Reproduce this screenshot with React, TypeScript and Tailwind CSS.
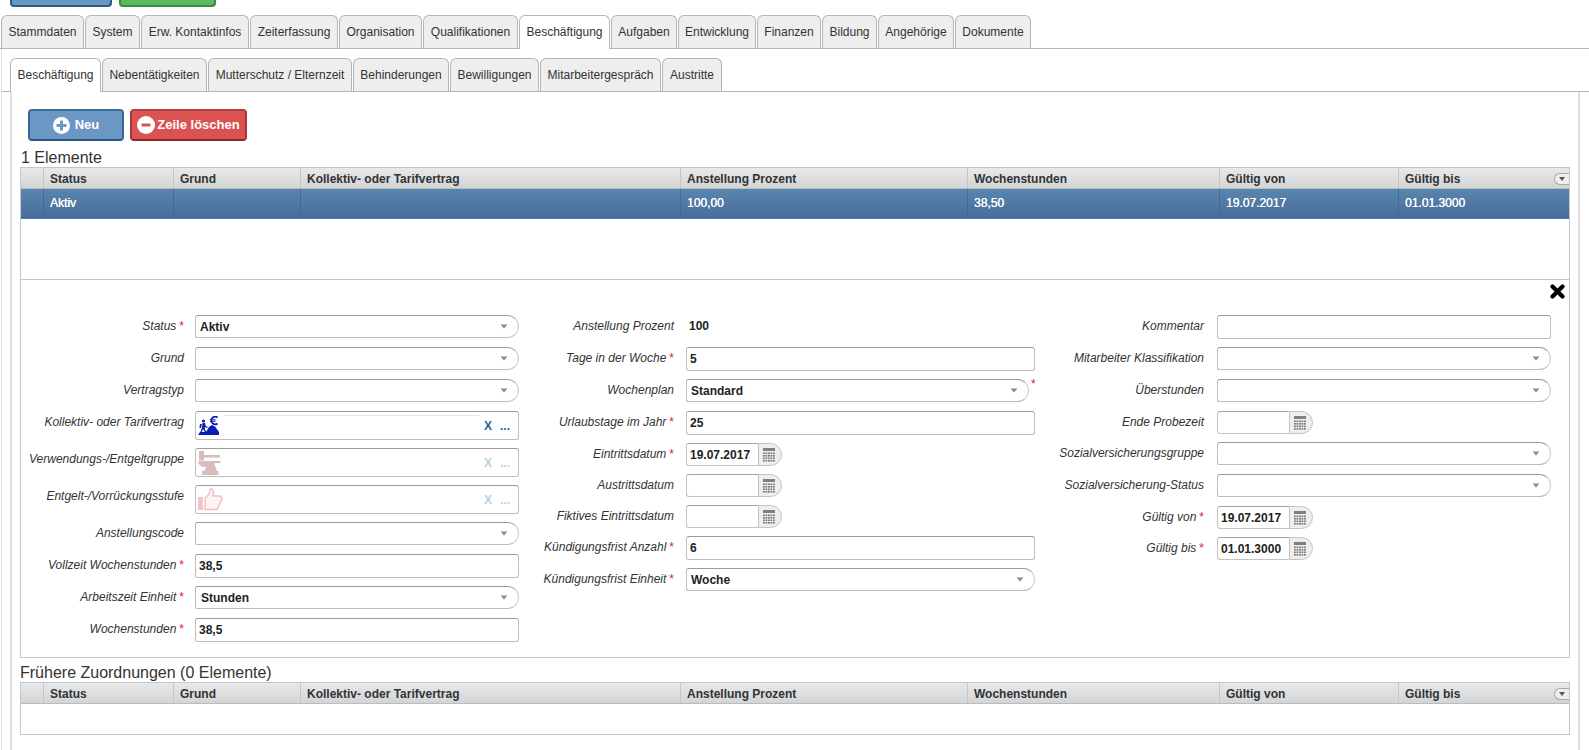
import React from "react";

const mainTabs: [string, string][] = [["Stammdaten","w-[83px]"],["System","w-[55px]"],["Erw. Kontaktinfos","w-[108px]"],["Zeiterfassung","w-[88px]"],["Organisation","w-[83px]"],["Qualifikationen","w-[95px]"],["Beschäftigung","w-[91px]"],["Aufgaben","w-[66px]"],["Entwicklung","w-[78px]"],["Finanzen","w-[64px]"],["Bildung","w-[55px]"],["Angehörige","w-[76px]"],["Dokumente","w-[76px]"]];
const subTabs: [string, string][] = [["Beschäftigung","w-[91px]"],["Nebentätigkeiten","w-[105px]"],["Mutterschutz / Elternzeit","w-[144px]"],["Behinderungen","w-[96px]"],["Bewilligungen","w-[89px]"],["Mitarbeitergespräch","w-[121px]"],["Austritte","w-[60px]"]];
const cols = ["","Status","Grund","Kollektiv- oder Tarifvertrag","Anstellung Prozent","Wochenstunden","Gültig von","Gültig bis"];
const vals = ["","Aktiv","","","100,00","38,50","19.07.2017","01.01.3000"];

function Tab({ label, w, active }: { label: string; w: string; active?: boolean }) {
  return (
    <div className={w + (active
      ? " h-[34px] -mb-px pt-[9px] mr-px border border-b-0 border-[#b5b5b5] rounded-t-[6px] bg-white text-[#333] leading-[14px] whitespace-nowrap flex justify-center"
      : " h-[33px] pt-[9px] mr-px border border-b-0 border-[#b5b5b5] rounded-t-[6px] bg-[#eeeeee] text-[#333] leading-[14px] whitespace-nowrap flex justify-center")}>
      {label}
    </div>
  );
}

function Arrow() {
  return (
    <svg width="8" height="6" viewBox="0 0 8 6" className="shrink-0">
      <path d="M0.5 0.5h7L4 4.5z" fill="#8a8a8a" />
    </svg>
  );
}

function GridHeader({ sort = true }: { sort?: boolean }) {
  return (
    <div className="relative grid grid-cols-[23px_130px_127px_380px_287px_252px_179px_1fr] h-[21px] bg-gradient-to-b from-[#e8e9ea] to-[#d2d4d6] border-b border-[#bcbcbc]">
      {cols.map((c, i) => (
        <div key={i} className={(i < 7 ? "border-r border-[#c4c6c8] " : "") + "pl-[6px] font-bold text-[#333] leading-[22px] truncate"}>{c}</div>
      ))}
      {sort && (
        <div className="absolute right-0 top-[5px] w-[15px] h-[12px] rounded-l-full border border-r-0 border-[#a9a9a9] bg-[#eeeeee] flex items-center justify-center">
          <svg width="6" height="4" viewBox="0 0 6 4"><path d="M0 0h6L3 4z" fill="#555" /></svg>
        </div>
      )}
    </div>
  );
}

function Label({ text, req, w }: { text: string; req?: boolean; w: string }) {
  return (
    <div className={w + " shrink-0 pt-[4px] text-right italic text-[#333] leading-[14px] whitespace-nowrap"}>
      {text}
      {req && <span className="not-italic text-[#e02020] ml-[3px]">*</span>}
    </div>
  );
}

const fieldBorder = "border border-[#bdbdbd] border-t-[#9c9c9c]";

function SelectBox({ value, w, pl = "pl-[4px]" }: { value?: string; w: string; pl?: string }) {
  return (
    <div className={w + " h-[23px] " + fieldBorder + " border-r-[#cfcfcf] rounded-l-[3px] rounded-r-[12px] bg-white flex items-center justify-between " + pl + " pr-[10px] font-bold text-[#222]"}>
      <span>{value}</span>
      <Arrow />
    </div>
  );
}

function TextBox({ value, w }: { value?: string; w: string }) {
  return (
    <div className={w + " h-[24px] " + fieldBorder + " rounded-[3px] bg-white flex items-center pl-[3px] font-bold text-[#222]"}>{value}</div>
  );
}

function Calendar() {
  return (
    <svg width="12" height="14" viewBox="0 0 12 14">
      <rect x="0" y="0" width="12" height="3" fill="#7d8186" />
      {[5, 7.5, 10, 12.5].map((y) =>
        [0, 2.5, 5, 7.5, 10].map((x) => <rect key={x + "-" + y} x={x} y={y - 0.5} width="1.8" height="1.6" fill="#777" />)
      )}
    </svg>
  );
}

function DateBox({ value, w = "w-[72px]" }: { value?: string; w?: string }) {
  return (
    <div className="flex h-[23px]">
      <div className={w + " border border-[#c4c4c4] border-t-[#a4a4a4] border-r-0 rounded-l-[3px] bg-white flex items-center pl-[3px] font-bold text-[#222]"}>{value}</div>
      <div className="w-[24px] border border-[#c4c4c4] rounded-r-[12px] bg-[#eeeeee] flex items-center pl-[4px]">
        <Calendar />
      </div>
    </div>
  );
}

function Hiker() {
  return (
    <svg width="21" height="19" viewBox="0 0 21 19">
      <g fill="#0b1db5">
        <path d="M0 19 L2 16 L8 16 L11 11 L14 9 L17 10.500 L21 16 V19 Z" />
        <circle cx="5.500" cy="5" r="1.600" />
        <path d="M4.500 7 h2.500 l.8 3 l2 1 l-.5 1 l-2.300-1 l-.3 1.500 l1.800 4 h-1.400 l-2-3.500 l-1.600 3.500 h-1.300 l1.800-5 z" />
        <path d="M2 8 h1.800 l-.8 4 h-1.600 z" />
      </g>
      <path d="M19.500 1.500 A3.800 3.800 0 1 0 19.500 7.500" fill="none" stroke="#0b1db5" strokeWidth="1.700" />
      <path d="M12 3.800h5.500M12 5.300h5.500" stroke="#0b1db5" strokeWidth="1" />
    </svg>
  );
}

function Anvil() {
  return (
    <svg width="23" height="24" viewBox="0 0 23 24">
      <g fill="#d9bcbc">
        <path d="M1 0 h5 v4 h16 v2.500 h-16 v3 h-5 z" />
        <path d="M7 10 h15.500 v2 h-6 c0 2 .5 4 2 5.500 v2.500 h2 V24 H4 v-4 h2 c1.500-1.500 2-2.500 2-4 c-4 0-7-1-8-5.500 z" />
      </g>
    </svg>
  );
}

function Thumb() {
  return (
    <svg width="25" height="23" viewBox="0 0 25 23">
      <rect x="0" y="9" width="5" height="13" fill="#f5c4c4" />
      <path d="M7 10.500 L11 6 L12.500 1 C15.500 1 16 3.500 15 8 H22 C24 8 24.500 10 23 13 L19 21.500 H7 Z" fill="#fdf4f4" stroke="#f3bfbf" strokeWidth="1.500" />
    </svg>
  );
}

function LookupBox({ icon, disabled, w }: { icon: React.ReactNode; disabled?: boolean; w: string }) {
  return (
    <div className={w + " relative h-[29px] " + fieldBorder + " rounded-[3px] bg-white flex items-center pl-[2px] pr-[8px]"}>
      {icon}
      {!disabled && <div className="absolute left-[28px] top-[3px] w-[255px] h-px bg-[#e4e4e4]" />}
      <div className={"ml-auto flex items-center gap-[8px] font-bold " + (disabled ? "text-[#b9d1e4]" : "text-[#2b6299]")}>
        <span className="text-[12px]">X</span>
        <span className="text-[12px]">...</span>
      </div>
    </div>
  );
}

function Row({ pitch = "h-[32px]", children }: { pitch?: string; children: React.ReactNode }) {
  return <div className={pitch + " flex items-start shrink-0"}>{children}</div>;
}

export default function App() {
  const L1 = "w-[163px] mr-[11px]";
  const L2 = "w-[155px] mr-[12px]";
  const L3 = "w-[155px] mr-[13px]";
  const c1 = "w-[324px]";
  const c2 = "w-[349px]";
  const c3 = "w-[334px]";
  return (
    <div className="w-[1589px] h-[750px] overflow-hidden bg-white text-[12px] font-['Liberation_Sans',Arial,sans-serif]">
      <div className="h-[15px] pl-[10px] flex gap-[7px] items-start">
        <div className="w-[102px] h-[7px] bg-[#6b97c4] border-2 border-t-0 border-[#2f5a86] rounded-b-[4px]" />
        <div className="w-[97px] h-[7px] bg-[#5cb85c] border-2 border-t-0 border-[#3c8a3c] rounded-b-[4px]" />
      </div>
      <div className="flex pl-px h-[34px] border-b border-[#b5b5b5]">
        {mainTabs.map(([t, w]) => <Tab key={t} label={t} w={w} active={t === "Beschäftigung"} />)}
      </div>
      <div className="ml-px border-l border-[#dddddd] pt-[9px] h-[701px] overflow-hidden">
        <div className="flex pl-[8px] h-[34px] border-b border-[#b5b5b5]">
          {subTabs.map(([t, w]) => <Tab key={t} label={t} w={w} active={t === "Beschäftigung"} />)}
        </div>
        <div className="ml-[8px] w-[1570px] h-[660px] border-l-2 border-r-2 border-[#dedede] pl-[8px] pr-[8px]">
          <div className="flex gap-[6px] pl-[8px] pt-[17px] h-[57px]">
            <div className="w-[96px] h-[32px] rounded-[4px] bg-[#6b97c4] border-2 border-t-[#3f6d9c] border-x-[#3a6694] border-b-[#2a5480] flex items-center justify-center gap-[5px] text-white font-bold text-[13px]">
              <svg width="17" height="17" viewBox="0 0 17 17"><circle cx="8.500" cy="8.500" r="8.500" fill="#fff" /><path d="M8.500 3.500v10M3.500 8.500h10" stroke="#6b97c4" strokeWidth="3" /></svg>
              Neu
            </div>
            <div className="w-[117px] h-[32px] rounded-[4px] bg-[#da5252] border-2 border-t-[#b33c3c] border-x-[#a83636] border-b-[#8a2828] flex items-center justify-center gap-[2px] text-white font-bold text-[13px]">
              <svg width="18" height="18" viewBox="0 0 18 18"><circle cx="9" cy="9" r="9" fill="#fff" /><path d="M4.500 9h9" stroke="#da5252" strokeWidth="3" /></svg>
              Zeile löschen
            </div>
          </div>
          <div className="h-[18px] text-[16px] leading-[18px] text-[#333] pl-px">1 Elemente</div>
          <div className="w-[1550px] h-[491px] border border-[#c6c6c6]">
            <GridHeader />
            <div className="grid grid-cols-[23px_130px_127px_380px_287px_252px_179px_1fr] h-[31px] bg-gradient-to-b from-[#5786ad] to-[#4a6c9b] border-y border-dotted border-y-[#2d77c0] -mt-px">
              {vals.map((v, i) => (
                <div key={i} className={(i < 7 ? "border-r border-[#3f6b96] " : "") + "pl-[6px] text-white leading-[29px] [text-shadow:0.3px_0_0_#ffffff]"}>{v}</div>
              ))}
            </div>
            <div className="h-[61px] border-b border-[#c6c6c6]" />
            <div className="relative h-[376px] pt-[35px] flex">
              <svg width="15" height="15" viewBox="0 0 15 15" className="absolute right-[4px] top-[4px]">
                <path d="M2.500 2.500 L12.500 12.500 M12.500 2.500 L2.500 12.500" stroke="#000" strokeWidth="4.200" strokeLinecap="round" />
              </svg>
              <div className="w-[498px] flex flex-col shrink-0">
                <Row><Label w={L1} text="Status" req /><SelectBox w={c1} value="Aktiv" /></Row>
                <Row><Label w={L1} text="Grund" /><SelectBox w={c1} /></Row>
                <Row><Label w={L1} text="Vertragstyp" /><SelectBox w={c1} /></Row>
                <Row pitch="h-[37px]"><Label w={L1} text="Kollektiv- oder Tarifvertrag" /><LookupBox w={c1} icon={<Hiker />} /></Row>
                <Row pitch="h-[37px]"><Label w={L1} text="Verwendungs-/Entgeltgruppe" /><LookupBox w={c1} disabled icon={<Anvil />} /></Row>
                <Row pitch="h-[37px]"><Label w={L1} text="Entgelt-/Vorrückungsstufe" /><LookupBox w={c1} disabled icon={<Thumb />} /></Row>
                <Row><Label w={L1} text="Anstellungscode" /><SelectBox w={c1} /></Row>
                <Row><Label w={L1} text="Vollzeit Wochenstunden" req /><TextBox w={c1} value="38,5" /></Row>
                <Row><Label w={L1} text="Arbeitszeit Einheit" req /><SelectBox w={c1} pl="pl-[5px]" value="Stunden" /></Row>
                <Row><Label w={L1} text="Wochenstunden" req /><TextBox w={c1} value="38,5" /></Row>
              </div>
              <div className="w-[531px] flex flex-col shrink-0">
                <Row><Label w={L2} text="Anstellung Prozent" /><div className="pl-[3px] pt-[4px] font-bold text-[#222] leading-[14px]">100</div></Row>
                <Row><Label w={L2} text="Tage in der Woche" req /><TextBox w={c2} value="5" /></Row>
                <Row>
                  <Label w={L2} text="Wochenplan" />
                  <SelectBox w="w-[343px]" value="Standard" />
                  <span className="ml-[2px] -mt-[2px] text-[#e02020] leading-[14px]">*</span>
                </Row>
                <Row><Label w={L2} text="Urlaubstage im Jahr" req /><TextBox w={c2} value="25" /></Row>
                <Row pitch="h-[31px]"><Label w={L2} text="Eintrittsdatum" req /><DateBox value="19.07.2017" /></Row>
                <Row pitch="h-[31px]"><Label w={L2} text="Austrittsdatum" /><DateBox /></Row>
                <Row pitch="h-[31px]"><Label w={L2} text="Fiktives Eintrittsdatum" /><DateBox /></Row>
                <Row><Label w={L2} text="Kündigungsfrist Anzahl" req /><TextBox w={c2} value="6" /></Row>
                <Row><Label w={L2} text="Kündigungsfrist Einheit" req /><SelectBox w={c2} value="Woche" /></Row>
              </div>
              <div className="flex flex-col shrink-0 -ml-px">
                <Row><Label w={L3} text="Kommentar" /><TextBox w={c3} /></Row>
                <Row><Label w={L3} text="Mitarbeiter Klassifikation" /><SelectBox w={c3} /></Row>
                <Row><Label w={L3} text="Überstunden" /><SelectBox w={c3} /></Row>
                <Row pitch="h-[31px]"><Label w={L3} text="Ende Probezeit" /><DateBox /></Row>
                <Row><Label w={L3} text="Sozialversicherungsgruppe" /><SelectBox w={c3} /></Row>
                <Row><Label w={L3} text="Sozialversicherung-Status" /><SelectBox w={c3} /></Row>
                <Row pitch="h-[31px]"><Label w={L3} text="Gültig von" req /><DateBox value="19.07.2017" /></Row>
                <Row><Label w={L3} text="Gültig bis" req /><DateBox value="01.01.3000" /></Row>
              </div>
            </div>
          </div>
          <div className="h-[24px] pt-[5px] text-[16px] leading-[19px] text-[#333]">Frühere Zuordnungen (0 Elemente)</div>
          <div className="w-[1550px] h-[53px] border border-[#c6c6c6]">
            <GridHeader />
          </div>
        </div>
      </div>
    </div>
  );
}
